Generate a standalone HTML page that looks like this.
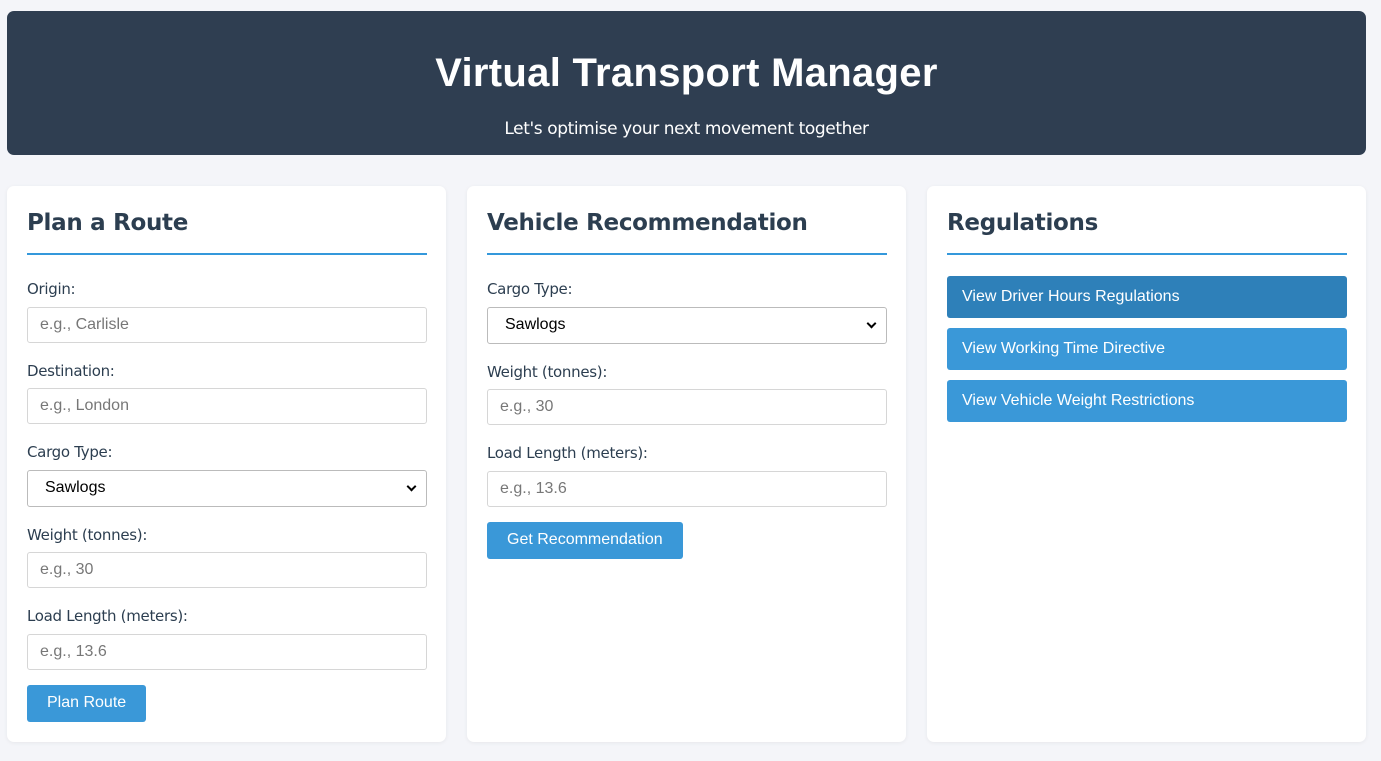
<!DOCTYPE html>
<html><head><style>
*{box-sizing:border-box;margin:0;padding:0}
body{width:1381px;height:761px;background:#f4f5f9;font-family:"DejaVu Sans","Liberation Sans",sans-serif;position:relative;overflow:hidden;color:#2c3e50}
.hdr{position:absolute;left:7px;top:11px;width:1359px;height:144px;background:#2f3e51;border-radius:7px;color:#fff;text-align:center}
.hdr h1{position:absolute;top:40px;width:100%;font:bold 40px "Liberation Sans",sans-serif;letter-spacing:0.3px}
.hdr p{position:absolute;top:108px;width:100%;font-size:17px;letter-spacing:-0.4px}
.card{position:absolute;top:186px;width:439px;height:556px;background:#fff;border-radius:7px;box-shadow:0 1px 4px rgba(0,0,0,.06)}
.card h2{position:absolute;left:20px;top:24px;font-size:23px;font-weight:bold;letter-spacing:-0.3px}
.line{position:absolute;left:20px;top:67px;width:400px;height:2px;background:#3498db}
.lbl{position:absolute;left:20px;font-size:15px;letter-spacing:-0.3px}
.in{position:absolute;left:20px;width:400px;height:36px;border:1px solid #d6d6d6;border-radius:3px;font:16px "Liberation Sans",sans-serif;color:#777;padding:8px 12px}
.sel{color:#000;border-color:#bbb}
.sel:after{content:"";position:absolute;right:11px;top:12px;width:5px;height:5px;border-right:2px solid #000;border-bottom:2px solid #000;transform:rotate(45deg)}
.btn{position:absolute;left:20px;height:37px;background:#3a98d8;color:#fff;border-radius:3px;font:16px "Liberation Sans",sans-serif;padding:9px 20px}
.rb{position:absolute;left:20px;width:400px;height:42px;background:#3a98d8;color:#fff;border-radius:3px;font:16px "Liberation Sans",sans-serif;padding:12px 15px}
</style></head><body>
<div class="hdr"><h1>Virtual Transport Manager</h1><p>Let's optimise your next movement together</p></div>

<div class="card" style="left:7px">
<h2>Plan a Route</h2><div class="line"></div>
<div class="lbl" style="top:94px">Origin:</div><div class="in" style="top:121px">e.g., Carlisle</div>
<div class="lbl" style="top:176px">Destination:</div><div class="in" style="top:202px">e.g., London</div>
<div class="lbl" style="top:257px">Cargo Type:</div><div class="in sel" style="top:284px;height:37px;padding-left:17px">Sawlogs</div>
<div class="lbl" style="top:340px">Weight (tonnes):</div><div class="in" style="top:366px">e.g., 30</div>
<div class="lbl" style="top:421px">Load Length (meters):</div><div class="in" style="top:448px">e.g., 13.6</div>
<div class="btn" style="top:499px">Plan Route</div>
</div>

<div class="card" style="left:467px">
<h2>Vehicle Recommendation</h2><div class="line"></div>
<div class="lbl" style="top:94px">Cargo Type:</div><div class="in sel" style="top:121px;height:37px;padding-left:17px">Sawlogs</div>
<div class="lbl" style="top:177px">Weight (tonnes):</div><div class="in" style="top:203px">e.g., 30</div>
<div class="lbl" style="top:258px">Load Length (meters):</div><div class="in" style="top:285px">e.g., 13.6</div>
<div class="btn" style="top:336px">Get Recommendation</div>
</div>

<div class="card" style="left:927px">
<h2>Regulations</h2><div class="line"></div>
<div class="rb" style="top:90px;background:#2e80b9">View Driver Hours Regulations</div>
<div class="rb" style="top:142px">View Working Time Directive</div>
<div class="rb" style="top:194px">View Vehicle Weight Restrictions</div>
</div>
</body></html>
